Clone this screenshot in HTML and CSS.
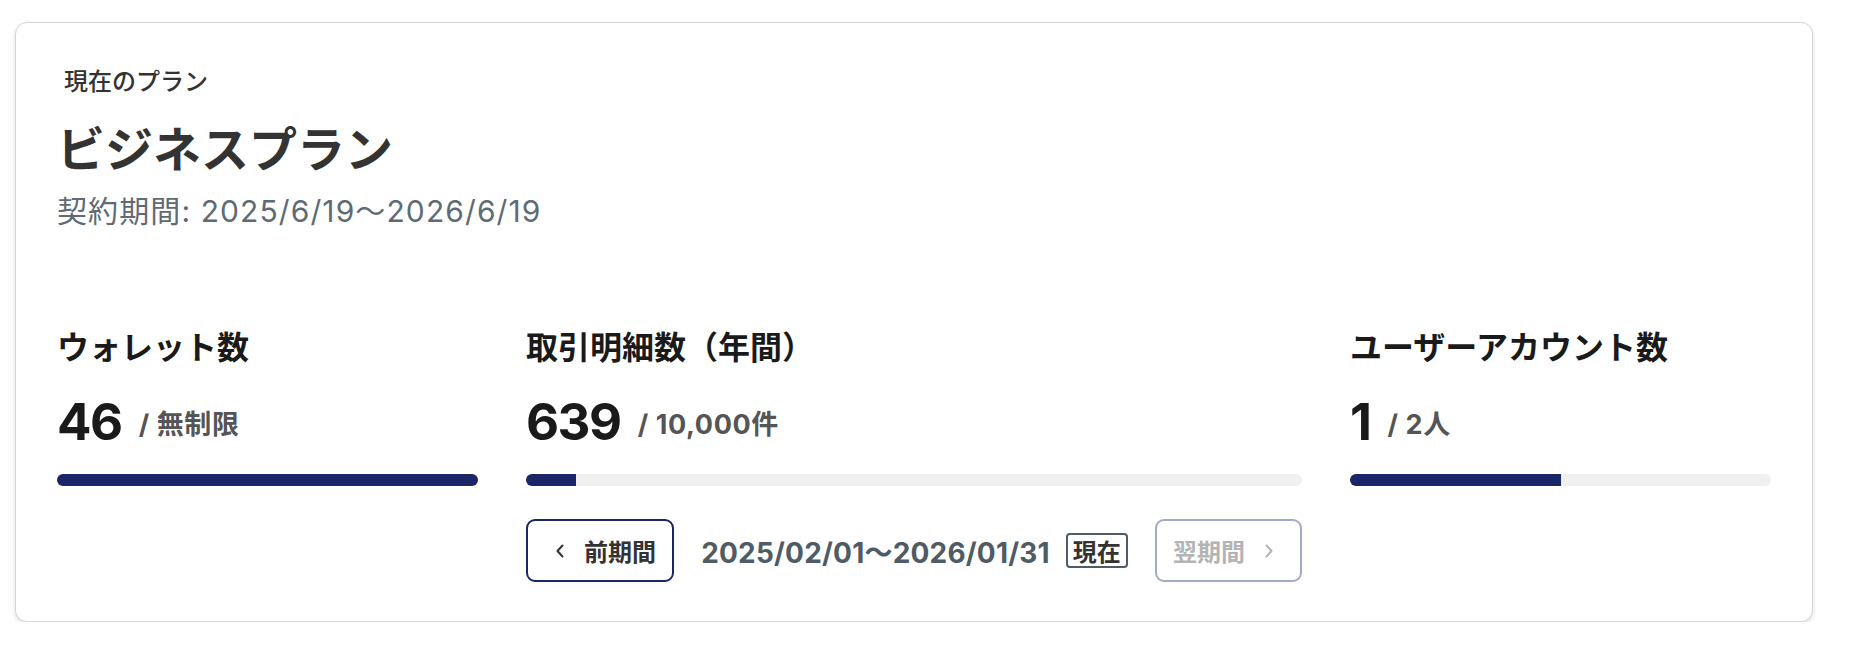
FILE: index.html
```html
<!DOCTYPE html>
<html lang="ja">
<head>
<meta charset="utf-8">
<title>現在のプラン</title>
<link rel="stylesheet" href="styles.css">
</head>
<body>
<div class="card">
  <div class="plan">
    <div class="plan-label">現在のプラン</div>
    <h1 class="plan-name">ビジネスプラン</h1>
    <div class="plan-term">契約期間: 2025/6/19〜2026/6/19</div>
  </div>
  <div class="stats">
    <div class="stat">
      <div class="stat-label">ウォレット数</div>
      <div class="stat-value"><span class="num">46</span><span class="limit">/ 無制限</span></div>
      <div class="bar"><div class="fill" style="width:100%"></div></div>
    </div>
    <div class="stat">
      <div class="stat-label">取引明細数（年間）</div>
      <div class="stat-value"><span class="num">639</span><span class="limit">/ 10,000件</span></div>
      <div class="bar"><div class="fill" style="width:6.39%"></div></div>
      <div class="period-nav">
        <button class="nav-btn prev" type="button">
          <span class="chev"><svg width="10" height="16" viewBox="0 0 10 16"><path d="M7.5 2.5 L2.5 8 L7.5 13.5" fill="none" stroke="currentColor" stroke-width="2" stroke-linecap="round" stroke-linejoin="round"/></svg></span>
          <span>前期間</span>
        </button>
        <div class="period">
          <span class="period-text">2025/02/01〜2026/01/31</span>
          <span class="badge">現在</span>
        </div>
        <button class="nav-btn next" type="button" disabled>
          <span>翌期間</span>
          <span class="chev"><svg width="10" height="16" viewBox="0 0 10 16"><path d="M2.5 2.5 L7.5 8 L2.5 13.5" fill="none" stroke="currentColor" stroke-width="2" stroke-linecap="round" stroke-linejoin="round"/></svg></span>
        </button>
      </div>
    </div>
    <div class="stat">
      <div class="stat-label">ユーザーアカウント数</div>
      <div class="stat-value"><span class="num">1</span><span class="limit">/ 2人</span></div>
      <div class="bar"><div class="fill" style="width:50%"></div></div>
    </div>
  </div>
</div>
</body>
</html>
```
FILE: styles.css
```css
* { box-sizing: border-box; }

html, body {
  margin: 0;
  padding: 0;
  background: #ffffff;
}

body {
  font-family: Inter, "Noto Sans CJK JP", sans-serif;
  color: #333333;
}

.card {
  width: 1798px;
  margin: 22px 0 0 15px;
  padding: 41px 41px 39px 41px;
  background: #ffffff;
  border: 1px solid #d6d6d6;
  border-radius: 12px;
  box-shadow: 0 2px 4px rgba(0, 0, 0, 0.14);
}

.plan-label {
  margin-left: 7px;
  font-size: 24px;
  line-height: 36px;
  font-weight: 500;
  color: #333333;
}

.plan-name {
  margin: 21px 0 0 0;
  font-size: 48px;
  line-height: 58px;
  font-weight: 700;
  color: #333333;
}

.plan-term {
  margin-top: 10px;
  font-size: 30px;
  line-height: 45px;
  font-weight: 400;
  letter-spacing: 1.1px;
  color: #5f6b74;
}

.stats {
  display: grid;
  grid-template-columns: 421px 776px 421px;
  column-gap: 48px;
  margin-top: 91px;
}

.stat-label {
  font-size: 32px;
  line-height: 45px;
  font-weight: 700;
  color: #1a1a1a;
}

.stat-value {
  display: flex;
  align-items: center;
  gap: 17px;
  margin-top: 21px;
  height: 62px;
}

.num {
  font-size: 51px;
  font-weight: 700;
  letter-spacing: -1.5px;
  color: #1a1a1a;
  line-height: 62px;
}

.limit {
  font-size: 27px;
  font-weight: 700;
  letter-spacing: 0.6px;
  color: #555555;
}

.bar {
  margin-top: 21px;
  height: 12px;
  border-radius: 6px;
  background: #f0f0f0;
  overflow: hidden;
}

.fill {
  height: 100%;
  background: #1b2669;
}

.period-nav {
  display: flex;
  align-items: center;
  justify-content: space-between;
  margin-top: 33px;
}

.nav-btn {
  display: flex;
  align-items: center;
  gap: 12px;
  height: 63px;
  background: #ffffff;
  border: 2px solid #1b2669;
  border-radius: 9px;
  font-family: Inter, "Noto Sans CJK JP", sans-serif;
  font-size: 24px;
  font-weight: 700;
  color: #333333;
  cursor: pointer;
}

.nav-btn.prev {
  width: 148px;
  padding: 0 16px 0 20px;
}

.nav-btn.next {
  width: 147px;
  padding: 0 18px 0 16px;
  border-color: #a4abca;
  color: #b4b4b4;
  cursor: default;
}

.chev {
  display: flex;
  align-items: center;
  justify-content: center;
  width: 24px;
  height: 24px;
}

.period {
  display: flex;
  align-items: center;
  gap: 16px;
}

.period-text {
  font-size: 28px;
  font-weight: 700;
  letter-spacing: 0.2px;
  color: #4f5b66;
}

.badge {
  display: flex;
  align-items: center;
  justify-content: center;
  height: 35px;
  padding: 0 5px;
  border: 2px solid #4f5b66;
  border-radius: 4px;
  font-size: 24px;
  font-weight: 700;
  color: #333333;
}
```
